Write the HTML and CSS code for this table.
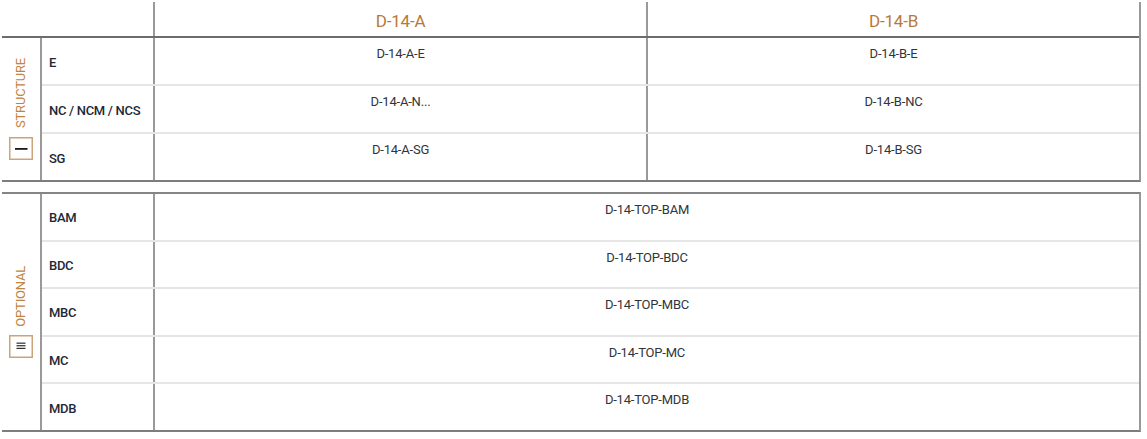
FILE: index.html
```html
<!DOCTYPE html>
<html>
<head>
<meta charset="utf-8">
<link rel="stylesheet" href="styles.css">
</head>
<body>
<div class="sheet">
  <section class="tbl tbl-structure">
    <div class="head">
      <div class="corner"></div>
      <div class="hcell col-a">D-14-A</div>
      <div class="hcell col-b">D-14-B</div>
    </div>
    <div class="body">
      <div class="cat">
        <span class="cat-label">STRUCTURE</span>
        <span class="cat-icon">
          <svg width="24" height="23" viewBox="0 0 24 23"><rect x="0.75" y="0.75" width="22.5" height="21.5" fill="#fff" stroke="#c9a47c" stroke-width="1.5"/><rect x="6" y="11" width="12.5" height="1.8" fill="#1a1a1a"/></svg>
        </span>
      </div>
      <div class="rows">
        <div class="row"><div class="label">E</div><div class="val col-a">D-14-A-E</div><div class="val col-b">D-14-B-E</div></div>
        <div class="row"><div class="label">NC / NCM / NCS</div><div class="val col-a">D-14-A-N...</div><div class="val col-b">D-14-B-NC</div></div>
        <div class="row"><div class="label">SG</div><div class="val col-a">D-14-A-SG</div><div class="val col-b">D-14-B-SG</div></div>
      </div>
    </div>
  </section>

  <section class="tbl tbl-optional">
    <div class="body">
      <div class="cat">
        <span class="cat-label">OPTIONAL</span>
        <span class="cat-icon">
          <svg width="24" height="23" viewBox="0 0 24 23"><rect x="0.75" y="0.75" width="22.5" height="21.5" fill="#fff" stroke="#c9a47c" stroke-width="1.5"/><g fill="#1a1a1a"><rect x="7.5" y="7.6" width="9" height="1.1"/><rect x="7.5" y="10.2" width="9" height="1.1"/><rect x="7.5" y="12.8" width="9" height="1.1"/></g></svg>
        </span>
      </div>
      <div class="rows">
        <div class="row"><div class="label">BAM</div><div class="val col-span">D-14-TOP-BAM</div></div>
        <div class="row"><div class="label">BDC</div><div class="val col-span">D-14-TOP-BDC</div></div>
        <div class="row"><div class="label">MBC</div><div class="val col-span">D-14-TOP-MBC</div></div>
        <div class="row"><div class="label">MC</div><div class="val col-span">D-14-TOP-MC</div></div>
        <div class="row"><div class="label">MDB</div><div class="val col-span">D-14-TOP-MDB</div></div>
      </div>
    </div>
  </section>
</div>
</body>
</html>
```

FILE: styles.css
```css
* { box-sizing: border-box; }

html, body {
  margin: 0;
  padding: 0;
  background: #fff;
}

body {
  font-family: Roboto, "Liberation Sans", Arial, sans-serif;
  color: #2e3338;
}

.sheet {
  padding: 2px 0 0 2px;
  display: flex;
  flex-direction: column;
  gap: 10px;
}

.tbl {
  width: 1139px;
  border-right: 2px solid #999;
  border-bottom: 2px solid #7d7d7d;
}

.tbl-optional {
  border-top: 2px solid #858585;
}

.head {
  display: flex;
  height: 36px;
  border-bottom: 2px solid #6c6c6c;
}

.corner {
  width: 153px;
  border-right: 2px solid #999;
}

.hcell {
  display: flex;
  justify-content: center;
  align-items: center;
  padding-top: 3px;
  font-size: 17px;
  color: #b7793a;
  letter-spacing: -0.2px;
}

.col-a {
  width: 493px;
  border-right: 2px solid #999;
}

.col-b {
  flex: 1;
}

.col-span {
  flex: 1;
}

.body {
  display: flex;
}

.tbl-structure .body { height: 142px; }
.tbl-optional .body { height: 236px; }

.cat {
  width: 40px;
  border-right: 2px solid #999;
  display: flex;
  flex-direction: column;
  align-items: center;
  justify-content: center;
  gap: 9px;
  padding-right: 1px;
}

.cat-label {
  writing-mode: vertical-rl;
  transform: rotate(180deg);
  font-size: 13px;
  color: #bf8442;
  letter-spacing: -0.2px;
  line-height: 14px;
}

.cat-icon {
  display: block;
  width: 24px;
  height: 23px;
}

.cat-icon svg { display: block; }

.rows {
  flex: 1;
  display: flex;
  flex-direction: column;
}

.row {
  flex: 1;
  display: flex;
  border-bottom: 2px solid #e6e6e6;
}

.row:last-child {
  border-bottom: none;
}

.label {
  width: 113px;
  border-right: 2px solid #999;
  display: flex;
  align-items: center;
  padding: 2px 0 0 7px;
  font-size: 13px;
  font-weight: 500;
  color: #1d2836;
  letter-spacing: -0.3px;
  white-space: nowrap;
}

.val {
  text-align: center;
  padding-top: 8px;
  font-size: 13px;
  color: #30353b;
  letter-spacing: -0.2px;
}
```
